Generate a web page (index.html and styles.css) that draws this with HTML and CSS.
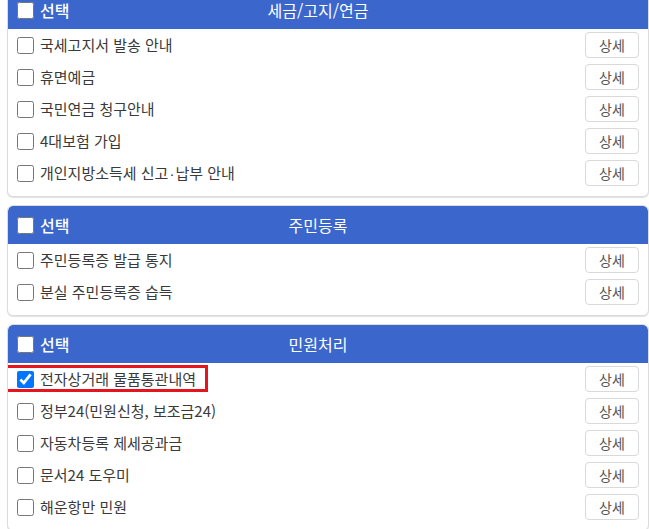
FILE: index.html
```html
<!DOCTYPE html>
<html lang="ko">
<head>
<meta charset="utf-8">
<title>알림 서비스 선택</title>
<link rel="stylesheet" href="styles.css">
</head>
<body>
<div class="list">
  <section class="panel">
    <div class="panel-head">
      <label class="head-select"><input type="checkbox" class="chk"><span>선택</span></label>
      <div class="head-title">세금/고지/연금</div>
      <div></div>
    </div>
    <ul class="rows">
      <li class="row"><label class="item"><input type="checkbox" class="chk"><span>국세고지서 발송 안내</span></label><button class="btn">상세</button></li>
      <li class="row"><label class="item"><input type="checkbox" class="chk"><span>휴면예금</span></label><button class="btn">상세</button></li>
      <li class="row"><label class="item"><input type="checkbox" class="chk"><span>국민연금 청구안내</span></label><button class="btn">상세</button></li>
      <li class="row"><label class="item"><input type="checkbox" class="chk"><span>4대보험 가입</span></label><button class="btn">상세</button></li>
      <li class="row"><label class="item"><input type="checkbox" class="chk"><span>개인지방소득세 신고<span class="dot">·</span>납부 안내</span></label><button class="btn">상세</button></li>
    </ul>
  </section>

  <section class="panel">
    <div class="panel-head">
      <label class="head-select"><input type="checkbox" class="chk"><span>선택</span></label>
      <div class="head-title">주민등록</div>
      <div></div>
    </div>
    <ul class="rows">
      <li class="row"><label class="item"><input type="checkbox" class="chk"><span>주민등록증 발급 통지</span></label><button class="btn">상세</button></li>
      <li class="row"><label class="item"><input type="checkbox" class="chk"><span>분실 주민등록증 습득</span></label><button class="btn">상세</button></li>
    </ul>
  </section>

  <section class="panel">
    <div class="panel-head">
      <label class="head-select"><input type="checkbox" class="chk"><span>선택</span></label>
      <div class="head-title">민원처리</div>
      <div></div>
    </div>
    <ul class="rows">
      <li class="row"><label class="item highlight"><input type="checkbox" class="chk" checked><span>전자상거래 물품통관내역</span></label><button class="btn">상세</button></li>
      <li class="row"><label class="item"><input type="checkbox" class="chk"><span>정부24(민원신청, 보조금24)</span></label><button class="btn">상세</button></li>
      <li class="row"><label class="item"><input type="checkbox" class="chk"><span>자동차등록 제세공과금</span></label><button class="btn">상세</button></li>
      <li class="row"><label class="item"><input type="checkbox" class="chk"><span>문서24 도우미</span></label><button class="btn">상세</button></li>
      <li class="row"><label class="item"><input type="checkbox" class="chk"><span>해운항만 민원</span></label><button class="btn">상세</button></li>
    </ul>
  </section>
</div>
</body>
</html>
```

FILE: styles.css
```css
html, body {
  margin: 0;
  padding: 0;
  background: #ffffff;
}

body {
  font-family: "Noto Sans CJK KR", "Noto Sans", sans-serif;
  color: #333333;
  overflow: hidden;
}

.list {
  margin: -10px 0 0 7px;
  width: 642px;
  display: flex;
  flex-direction: column;
  gap: 8px;
}

.panel {
  border: 1px solid #dcdcdc;
  border-radius: 6px;
  background: #ffffff;
  box-shadow: 0 1px 1px rgba(0, 0, 0, 0.12);
  overflow: hidden;
}

.panel-head {
  height: 38px;
  background: #3b66cc;
  color: #ffffff;
  display: grid;
  grid-template-columns: 1fr auto 1fr;
  align-items: center;
  padding: 0 29px 0 9px;
  border-radius: 5px 5px 0 0;
  line-height: 17px;
}

.head-select {
  display: flex;
  align-items: center;
  gap: 6px;
  font-size: 16px;
  font-weight: 500;
}

.head-title {
  font-size: 16px;
}

.chk {
  width: 17px;
  height: 17px;
  margin: 0;
  flex: none;
}

.rows {
  list-style: none;
  margin: 0;
  padding: 0 9px 7px 9px;
}

.row {
  height: 32px;
  display: flex;
  align-items: center;
  justify-content: space-between;
}

.item {
  display: flex;
  align-items: center;
  gap: 6px;
  font-size: 15px;
  line-height: 22px;
  color: #3a3a3a;
}

.dot {
  font-family: "Liberation Sans", sans-serif;
  padding: 0 1px;
}

.highlight {
  position: relative;
}

.highlight::after {
  content: "";
  position: absolute;
  left: -12px;
  right: -12px;
  top: -3px;
  bottom: -2px;
  border: 3px solid #e5151d;
}

.btn {
  width: 54px;
  height: 26px;
  border: 1px solid #d9d9d9;
  border-radius: 4px;
  background: #ffffff;
  font-family: inherit;
  font-size: 14px;
  color: #555555;
  padding: 0;
}
```
